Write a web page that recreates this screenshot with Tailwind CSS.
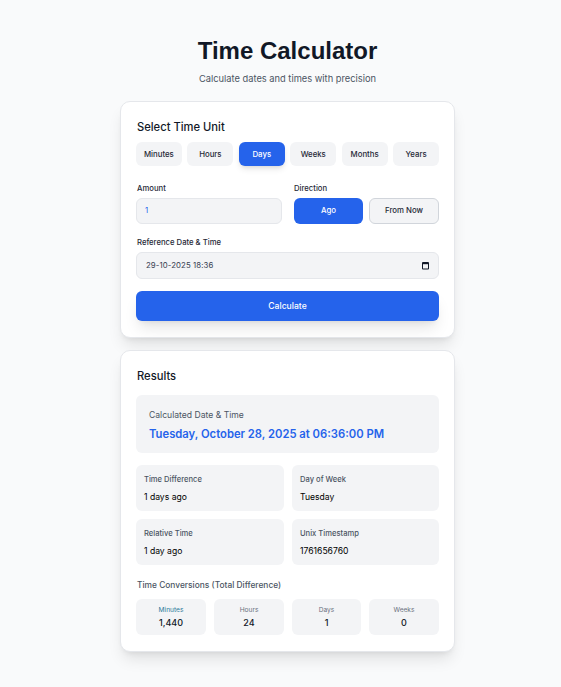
<!DOCTYPE html>
<html lang="en">
<head>
  <title>Time Calculator</title>
  <script src="https://cdn.jsdelivr.net/npm/@tailwindcss/browser@4"></script>
</head>
<body class="min-h-screen bg-[#f9fafb] font-['Inter',sans-serif] text-[#111827]">
  <main class="ml-[120px] w-[335px] pt-[36px]">
    <header class="text-center">
      <h1 class="font-['Liberation_Sans',sans-serif] text-[24px] leading-[30px] font-bold">Time Calculator</h1>
      <p class="mt-[6px] text-[9.3px] leading-[14px] text-[#4b5563]">Calculate dates and times with precision</p>
    </header>

    <section class="mt-[15px] h-[237px] rounded-[10px] border border-[#e5e7eb] bg-white px-[15px] pt-[17px] shadow-lg">
      <h2 class="pl-[1px] text-[11.2px] leading-[16px] font-medium">Select Time Unit</h2>
      <div class="mt-[7px] grid grid-cols-6 gap-[5.6px]">
        <button class="h-[24px] rounded-md bg-[#f3f4f6] pt-[1px] text-[7.8px] font-medium text-[#1f2937]">Minutes</button>
        <button class="h-[24px] rounded-md bg-[#f3f4f6] pt-[1px] text-[7.8px] font-medium text-[#1f2937]">Hours</button>
        <button class="h-[24px] rounded-md bg-[#2563eb] pt-[1px] text-[7.8px] font-medium text-white shadow-md">Days</button>
        <button class="h-[24px] rounded-md bg-[#f3f4f6] pt-[1px] text-[7.8px] font-medium text-[#1f2937]">Weeks</button>
        <button class="h-[24px] rounded-md bg-[#f3f4f6] pt-[1px] text-[7.8px] font-medium text-[#1f2937]">Months</button>
        <button class="h-[24px] rounded-md bg-[#f3f4f6] pt-[1px] text-[7.8px] font-medium text-[#1f2937]">Years</button>
      </div>

      <div class="mt-[16px] grid grid-cols-[146px_145px] gap-x-[12px]">
        <div>
          <label class="block pt-[1px] pl-[1px] text-[7.7px] leading-[12px] font-medium text-[#1f2937]">Amount</label>
          <div class="mt-[3px] flex h-[26px] items-center rounded-md border border-[#e5e7eb] bg-[#f3f4f6] px-[8px] text-[7.8px] text-[#2563eb]">1</div>
        </div>
        <div>
          <label class="block pt-[1px] text-[7.7px] leading-[12px] font-medium text-[#1f2937]">Direction</label>
          <div class="mt-[3px] grid grid-cols-[69px_70px] gap-[6px]">
            <button class="h-[26px] rounded-md bg-[#2563eb] text-[7.8px] font-medium text-white">Ago</button>
            <button class="h-[26px] rounded-md border border-[#d1d5db] bg-[#f3f4f6] text-[7.8px] font-medium text-[#1f2937]">From Now</button>
          </div>
        </div>
      </div>

      <label class="mt-[12px] block pt-[1px] pl-[1px] text-[7.7px] leading-[12px] font-medium text-[#1f2937]">Reference Date &amp; Time</label>
      <div class="mt-[3px] flex h-[27px] items-center justify-between rounded-md border border-[#e5e7eb] bg-[#f3f4f6] px-[8px] text-[7.8px] text-[#374151]">
        <span class="pt-[1px] pl-[1px] tracking-[0.1px]">29-10-2025 18:36</span>
        <svg class="h-[9px] w-[9px]" viewBox="0 0 9 9" fill="none">
          <rect x="1" y="1" width="7" height="7.5" rx="1" fill="#111827"/>
          <rect x="2" y="3.2" width="5" height="4.3" fill="#f3f4f6"/>
        </svg>
      </div>

      <button class="mt-[12px] h-[30px] w-full rounded-md bg-[#2563eb] pt-[1px] text-[8.6px] font-medium text-white shadow-lg">Calculate</button>
    </section>

    <section class="mt-[12px] h-[302px] rounded-[10px] border border-[#e5e7eb] bg-white px-[15px] pt-[17px] shadow-lg">
      <h2 class="pl-[1px] text-[11.2px] leading-[16px] font-medium">Results</h2>

      <div class="mt-[11px] h-[58px] rounded-md bg-[#f3f4f6] px-[13px] pt-[13px]">
        <p class="text-[8.6px] leading-[14px] text-[#4b5563]">Calculated Date &amp; Time</p>
        <p class="mt-[3px] text-[11.25px] leading-[18px] font-semibold text-[#2563eb]">Tuesday, October 28, 2025 at 06:36:00 PM</p>
      </div>

      <div class="mt-[12px] grid grid-cols-[148px_147px] gap-[8px]">
        <div class="h-[46px] rounded-md bg-[#f3f4f6] px-[8px] pt-[9px]">
          <p class="text-[7.6px] leading-[12px] font-medium text-[#4b5563]">Time Difference</p>
          <p class="mt-[5px] text-[8.6px] leading-[13px] text-black">1 days ago</p>
        </div>
        <div class="h-[46px] rounded-md bg-[#f3f4f6] px-[8px] pt-[9px]">
          <p class="text-[7.6px] leading-[12px] font-medium text-[#4b5563]">Day of Week</p>
          <p class="mt-[5px] text-[8.6px] leading-[13px] text-black">Tuesday</p>
        </div>
        <div class="h-[46px] rounded-md bg-[#f3f4f6] px-[8px] pt-[9px]">
          <p class="text-[7.6px] leading-[12px] font-medium text-[#4b5563]">Relative Time</p>
          <p class="mt-[5px] text-[8.6px] leading-[13px] text-black">1 day ago</p>
        </div>
        <div class="h-[46px] rounded-md bg-[#f3f4f6] px-[8px] pt-[9px]">
          <p class="text-[7.6px] leading-[12px] font-medium text-[#4b5563]">Unix Timestamp</p>
          <p class="mt-[5px] text-[8.6px] leading-[13px] text-black">1761656760</p>
        </div>
      </div>

      <p class="mt-[13px] pl-[1px] text-[8.4px] leading-[14px] font-medium text-[#4b5563]">Time Conversions (Total Difference)</p>
      <div class="mt-[7px] grid grid-cols-[70px_70px_69px_70px] gap-[8px]">
        <div class="h-[36px] rounded-md bg-[#f3f4f6] pt-[6px] text-center">
          <p class="text-[6.6px] leading-[11px] text-[#2b7a9b]">Minutes</p>
          <p class="text-[9px] leading-[14px] font-medium">1,440</p>
        </div>
        <div class="h-[36px] rounded-md bg-[#f3f4f6] pt-[6px] text-center">
          <p class="text-[6.6px] leading-[11px] text-[#6b7280]">Hours</p>
          <p class="text-[9px] leading-[14px] font-medium">24</p>
        </div>
        <div class="h-[36px] rounded-md bg-[#f3f4f6] pt-[6px] text-center">
          <p class="text-[6.6px] leading-[11px] text-[#6b7280]">Days</p>
          <p class="text-[9px] leading-[14px] font-medium">1</p>
        </div>
        <div class="h-[36px] rounded-md bg-[#f3f4f6] pt-[6px] text-center">
          <p class="text-[6.6px] leading-[11px] text-[#6b7280]">Weeks</p>
          <p class="text-[9px] leading-[14px] font-medium">0</p>
        </div>
      </div>
    </section>
  </main>
</body>
</html>
